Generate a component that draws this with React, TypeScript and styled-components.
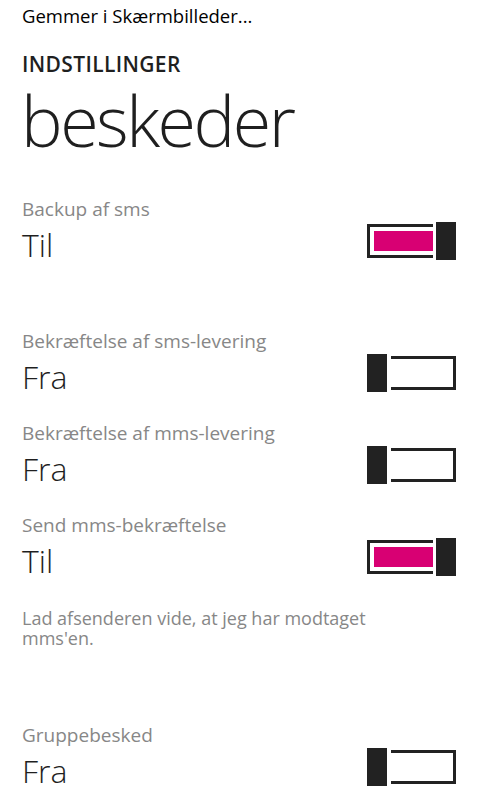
import React from "react";
import styled, { createGlobalStyle } from "styled-components";

const GlobalStyle = createGlobalStyle`
  html, body {
    margin: 0;
    padding: 0;
    background: #ffffff;
  }
  body {
    font-family: "Open Sans", "Noto Sans", sans-serif;
    color: #1f1f1f;
  }
`;

const Page = styled.div`
  width: 480px;
  height: 800px;
  overflow: hidden;
  box-sizing: border-box;
  padding: 0 24px 0 22px;
  display: flex;
  flex-direction: column;
`;

const StatusText = styled.div`
  padding-top: 4px;
  font-size: 18.5px;
  line-height: 24px;
  color: #000;
`;

const AppTitle = styled.div`
  margin-top: 22px;
  font-size: 21px;
  line-height: 28px;
  font-weight: 600;
  letter-spacing: 0.35px;
  color: #1f1f1f;
`;

const PageTitle = styled.h1`
  margin: 4px 0 0 -1px;
  font-size: 70px;
  line-height: 76px;
  font-weight: 300;
  letter-spacing: -2.5px;
  color: #1f1f1f;
`;

const Setting = styled.section<{ $gap: number }>`
  margin-top: ${(p) => p.$gap}px;
  display: flex;
  flex-direction: column;
`;

const Label = styled.div`
  font-size: 19px;
  line-height: 26px;
  color: #878787;
`;

const ValueRow = styled.div`
  display: flex;
  align-items: flex-start;
  justify-content: space-between;
`;

const Value = styled.div`
  font-size: 32px;
  line-height: 46px;
  font-weight: 300;
  color: #1f1f1f;
`;

const Description = styled.p`
  margin: 24px 0 0;
  font-size: 18px;
  line-height: 20px;
  color: #878787;
  max-width: 380px;
`;

const SwitchBox = styled.div<{ $on: boolean }>`
  width: 89px;
  height: 38px;
  display: flex;
  flex-direction: ${(p) => (p.$on ? "row" : "row-reverse")};
  align-items: center;
  gap: ${(p) => (p.$on ? 3 : 4)}px;
  flex-shrink: 0;
`;

const Track = styled.div<{ $on: boolean }>`
  flex: 1;
  height: 34px;
  box-sizing: border-box;
  border: 3px solid #222;
  ${(p) => (p.$on ? "border-right: none;" : "border-left: none;")}
  padding: 4px 0 4px 4px;
  display: flex;
`;

const Fill = styled.div`
  flex: 1;
  background: #d80073;
`;

const Thumb = styled.div`
  width: 20px;
  height: 38px;
  background: #222;
`;

const ToggleSwitch = ({ on }: { on: boolean }) => (
  <SwitchBox $on={on}>
    <Track $on={on}>{on && <Fill />}</Track>
    <Thumb />
  </SwitchBox>
);

type Item = { label: string; on: boolean; gap: number; description?: string };

const items: Item[] = [
  { label: "Backup af sms", on: true, gap: 38 },
  { label: "Bekræftelse af sms-levering", on: false, gap: 60 },
  { label: "Bekræftelse af mms-levering", on: false, gap: 20 },
  {
    label: "Send mms-bekræftelse",
    on: true,
    gap: 20,
    description: "Lad afsenderen vide, at jeg har modtaget mms'en.",
  },
  { label: "Gruppebesked", on: false, gap: 74 },
];

export default function App() {
  return (
    <>
      <GlobalStyle />
      <Page>
        <StatusText>Gemmer i Skærmbilleder...</StatusText>
        <AppTitle>INDSTILLINGER</AppTitle>
        <PageTitle>beskeder</PageTitle>
        {items.map((it) => (
          <Setting key={it.label} $gap={it.gap}>
            <Label>{it.label}</Label>
            <ValueRow>
              <Value>{it.on ? "Til" : "Fra"}</Value>
              <ToggleSwitch on={it.on} />
            </ValueRow>
            {it.description && <Description>{it.description}</Description>}
          </Setting>
        ))}
      </Page>
    </>
  );
}
